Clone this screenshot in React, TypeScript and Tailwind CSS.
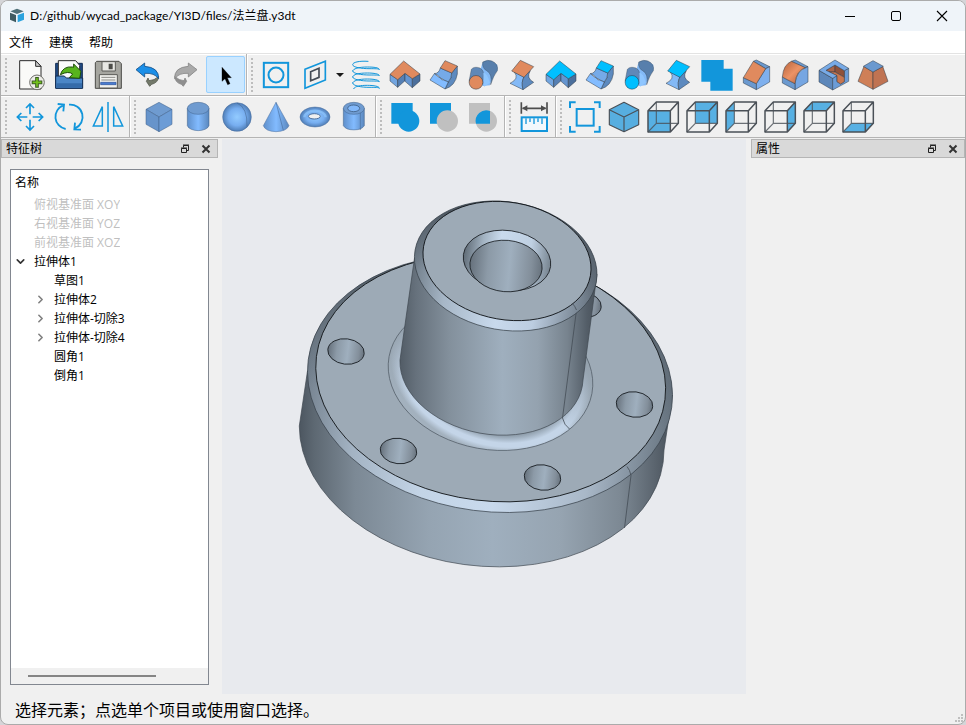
import type { ReactNode } from 'react';
import { ChevronDown, ChevronRight } from 'lucide-react';

const ACCENT = '#1296db';
const EDGE = '#2f3a46';
const ORANGE = '#e08a5e';
const CYAN = '#00bfff';

interface ToolItem {
  label: string;
  icon: ReactNode;
  active?: boolean;
  menu?: boolean;
}

interface TreeItem {
  name: string;
  depth: number;
  muted?: boolean;
  state?: 'open' | 'closed';
}

/* ---------- toolbar icons, all on a 99 x 99 grid ---------- */

function Icon({ children }: { children: ReactNode }) {
  return (
    <svg viewBox="0 0 99 99" className="size-[33px] shrink-0" fill="none" aria-hidden="true">
      {children}
    </svg>
  );
}

const NewIcon = () => (
  <Icon>
    <path d="M17 8H65L81 25V93H17Z" fill="#fafaf8" stroke="#2b2b2b" strokeWidth="3" />
    <path d="M65 8V25H81Z" fill="#cfcfcf" stroke="#2b2b2b" strokeWidth="3" />
    <circle cx="69" cy="73" r="22" fill="#ecece8" stroke="#6d6d68" strokeWidth="3" />
    <path d="M69 57V89M53 73H85" stroke="#3c5c24" strokeWidth="11" />
    <path d="M69 60V86M56 73H82" stroke="#73c31c" strokeWidth="5" />
  </Icon>
);

const OpenIcon = () => (
  <Icon>
    <path d="M8 16H88V90H8Z" fill="#1f4a86" stroke="#122c52" strokeWidth="3" />
    <path d="M16 8H68L80 22V62H16Z" fill="#fafafa" stroke="#2b2b2b" strokeWidth="3" />
    <path d="M8 54H34L40 60H89V91H8Z" fill="#4b86c6" stroke="#122c52" strokeWidth="3" />
    <path d="M10 76H87V89H10Z" fill="#356ba9" />
    <path d="M22 50Q30 24 58 27L62 28L62 18L84 40L80 61L49 59L59 48Q46 38 22 50Z" fill="#58b41c" stroke="#1d4d08" strokeWidth="3" strokeLinejoin="round" />
  </Icon>
);

const SaveIcon = () => (
  <Icon>
    <path d="M14 10H81L88 17V91H10V14Z" fill="#a5a59f" stroke="#4b4b48" strokeWidth="3" />
    <path d="M30 11H70V39H30Z" fill="#e8e8e4" stroke="#5a5a56" strokeWidth="3" />
    <path d="M50 17H62V34H50Z" fill="#4c4c48" />
    <path d="M22 50H76V90H22Z" fill="#f2f2ee" stroke="#5a5a56" strokeWidth="3" />
    <path d="M28 58H70M28 66H70" stroke="#8a8a86" strokeWidth="3" />
    <path d="M26 73H72V80H26Z" fill="#4a7dd0" stroke="#2c5299" strokeWidth="2" />
  </Icon>
);

const UndoIcon = () => (
  <Icon>
    <path d="M83 55Q82 74 62 79L56 85L46 70L51 60L54 68Q70 68 83 55Z" fill="#73796a" stroke="#3f4438" strokeWidth="2" />
    <path d="M15 35L41 15V25Q84 28 83 62Q70 44 41 46V57Z" fill="#1b8fe8" stroke="#164f87" strokeWidth="2.5" strokeLinejoin="round" />
  </Icon>
);

const RedoIcon = () => (
  <Icon>
    <path d="M14 55Q15 74 34 79L40 85L50 70L45 60L42 68Q28 68 14 55Z" fill="#8f8f8f" stroke="#7c7c7c" strokeWidth="2" />
    <path d="M81 35L55 15V25Q12 28 14 62Q27 44 55 46V57Z" fill="#a9a9a9" stroke="#868686" strokeWidth="2.5" strokeLinejoin="round" />
  </Icon>
);

const PointerIcon = () => (
  <Icon>
    <path d="M39 28V70L48 62L56 80L63 77L55 59H67Z" fill="#000" stroke="#000" strokeWidth="1" />
  </Icon>
);

const SketchIcon = () => (
  <Icon>
    <rect x="11.5" y="14.5" width="73" height="73" stroke={ACCENT} strokeWidth="6" />
    <circle cx="48" cy="51" r="22.5" stroke={ACCENT} strokeWidth="6" />
  </Icon>
);

const PlaneIcon = () => (
  <Icon>
    <path d="M18 34L79 10V66L18 91Z" stroke={ACCENT} strokeWidth="5" />
    <path d="M35 41L60 31V58L35 68Z" stroke="#444b55" strokeWidth="5" />
  </Icon>
);

const HelixIcon = () => (
  <Icon>
    <g stroke={ACCENT} strokeWidth="3" strokeLinecap="round">
      <path d="M57 10C30 8 11 13 11 20C11 28 38 32 60 32C78 32 91 32 91 35C91 29 75 27 55 27C30 27 11 32 11 39" />
      <path d="M11 39C11 47 38 51 60 51C78 51 91 51 91 53C91 48 75 45 55 45C30 45 11 49 11 57" />
      <path d="M11 57C11 65 38 69 60 69C78 69 91 69 91 72C91 66 75 63 55 63C30 63 11 68 11 75" />
      <path d="M11 75C11 84 38 88 60 88C78 88 91 88 91 91C91 85 75 82 55 82C35 82 18 84 14 92" />
    </g>
  </Icon>
);

const ExtrudeIcon = ({ tint }: { tint: string }) => (
  <Icon>
    <g stroke={EDGE} strokeWidth="1.5" strokeLinejoin="round">
      <path d="M6 49L29 65V88L6 69Z" fill="#72a5e0" />
      <path d="M29 65L51 46V68L29 88Z" fill="#557fb4" />
      <path d="M51 46L73 62V89L51 70Z" fill="#6595d0" />
      <path d="M73 62L96 48V69L73 89Z" fill="#4b6f9c" />
      <path d="M6 49L47 9L96 48L73 62L51 46L29 65Z" fill={tint} />
    </g>
  </Icon>
);

const SweepIcon = ({ tint }: { tint: string }) => (
  <Icon>
    <g stroke={EDGE} strokeWidth="1.5" strokeLinejoin="round">
      <path d="M91 24V48Q85 84 54 93L64 72Q74 62 74 45Z" fill="#5d8abf" />
      <path d="M40 30L74 45Q74 60 64 72L50 66Q46 62 40 60Q34 50 22 47Q36 46 40 30Z" fill="#75aae8" />
      <path d="M22 47L9 66L54 93L64 72L50 66Q44 68 40 60Q34 58 22 47Z" fill="#83bcff" />
      <path d="M54 8L91 24L74 45L40 30Z" fill={tint} />
    </g>
  </Icon>
);

const LoftIcon = ({ tint }: { tint: string }) => (
  <Icon>
    <path d="M48 18Q56 4 74 10L94 20V38Q80 44 72 82L50 84L38 58Z" fill="#83b9f6" />
    <path d="M50 12Q64 4 78 9Q98 18 94 38Q82 54 74 80Q80 48 62 38Q48 32 50 12Z" fill="#587fac" stroke={EDGE} strokeWidth="1" />
    <path d="M9 70L16 34Q24 24 42 30Q56 38 52 58L50 78Q30 48 9 70Z" fill="#6088b8" stroke={EDGE} strokeWidth="1" />
    <path d="M52 44Q62 42 72 74L54 86Z" fill="#8fc6ff" />
    <circle cx="30" cy="73" r="20.5" fill={tint} stroke={EDGE} strokeWidth="1.5" />
  </Icon>
);

const BoundaryIcon = ({ tint }: { tint: string }) => (
  <Icon>
    <g stroke={EDGE} strokeWidth="1.5" strokeLinejoin="round">
      <path d="M28 42Q44 62 15 76L54 95Q48 72 57 57Z" fill="#83b9f6" />
      <path d="M57 57L76 38Q62 60 86 73L54 95Q48 72 57 57Z" fill="#5d8abf" />
      <path d="M46 7L86 26L57 58L20 39Z" fill={tint} />
    </g>
  </Icon>
);

const CombineIcon = () => (
  <Icon>
    <path d="M4 6H71V32H98V98H31V71H4Z" fill={ACCENT} />
  </Icon>
);

const ChamferIcon = () => (
  <Icon>
    <g stroke={EDGE} strokeWidth="1.5" strokeLinejoin="round">
      <path d="M52 6L92 26L80 32L43 10Z" fill="#6b99cf" />
      <path d="M92 26V72L52 95V77L80 32Z" fill="#7fb0ee" />
      <path d="M13 59L52 77V95L13 75Z" fill="#6b99cf" />
      <path d="M43 10L80 32L52 77L13 59Z" fill={ORANGE} />
    </g>
  </Icon>
);

const FilletIcon = () => (
  <Icon>
    <defs>
      <linearGradient id="fillet" x1="0" y1="0" x2="1" y2="1">
        <stop offset="0" stopColor="#b4623c" />
        <stop offset=".5" stopColor="#ec9366" />
        <stop offset="1" stopColor="#a85c3a" />
      </linearGradient>
    </defs>
    <g stroke={EDGE} strokeWidth="1.5" strokeLinejoin="round">
      <path d="M52 6L90 26L80 29L40 10Z" fill="#6b99cf" />
      <path d="M90 26V72L51 95V77Q54 38 90 26Z" fill="#76a6e2" />
      <path d="M13 57L51 77V95L13 75Z" fill="#6b99cf" />
      <path d="M40 10L82 29Q54 38 51 77L13 57Q16 20 40 10Z" fill="url(#fillet)" />
    </g>
  </Icon>
);

const ShellIcon = () => (
  <Icon>
    <g stroke={EDGE} strokeWidth="1.5" strokeLinejoin="round">
      <path d="M6 37L47 61V96L6 72Z" fill="#5d87ba" />
      <path d="M47 61L60 53V71L71 78L82 71V38L95 31V70L47 96Z" fill="#6c9cd6" />
      <path d="M27 37L54 21V42L36 42Z" fill="#a9654a" />
      <path d="M54 21L82 38V58L54 42Z" fill="#90523a" />
      <path d="M54 42L82 58V71L71 78L60 71V53L36 42Z" fill="#c97750" />
      <path d="M54 6L95 31L82 38L54 21L27 37L60 53L47 61L6 37Z" fill="#78aae6" />
    </g>
  </Icon>
);

const DraftIcon = () => (
  <Icon>
    <g stroke={EDGE} strokeWidth="1.5" strokeLinejoin="round">
      <path d="M24 25L51 42V94L6 70Z" fill="#cf7f57" />
      <path d="M51 42L80 25L96 70L51 94Z" fill="#c07352" />
      <path d="M51 8L82 25L51 42L22 25Z" fill="#6b99cf" />
    </g>
  </Icon>
);

const MoveIcon = () => (
  <Icon>
    <path d="M48 13V43M48 59V89M11 51H40M56 51H85M36 24L48 12L60 24M36 78L48 90L60 78M22 39L10 51L22 63M74 39L86 51L74 63" stroke={ACCENT} strokeWidth="5" />
  </Icon>
);

const RotateIcon = () => (
  <Icon>
    <g stroke={ACCENT} strokeWidth="5.5">
      <path d="M38 87A37 37 0 0 1 31 16M14 12L33 14L31 34" />
      <path d="M48 14A37 37 0 0 1 66 85M84 89L64 88L66 68" />
    </g>
  </Icon>
);

const MirrorIcon = () => (
  <Icon>
    <path d="M48 6V96M31 20V78H4ZM65 20V78H92Z" stroke={ACCENT} strokeWidth="4.5" />
  </Icon>
);

const BoxIcon = () => (
  <Icon>
    <g stroke="#3f5f86" strokeWidth="1.5" strokeLinejoin="round">
      <path d="M48 7L87 28L48 51L9 28Z" fill="#6f9bd0" />
      <path d="M9 28L48 51V95L9 73Z" fill="#6794cb" />
      <path d="M87 28V73L48 95V51Z" fill="#6c9cd6" />
    </g>
  </Icon>
);

const CylinderIcon = () => (
  <Icon>
    <defs>
      <linearGradient id="cyl">
        <stop offset="0" stopColor="#5f8fca" />
        <stop offset=".5" stopColor="#82bbff" />
        <stop offset="1" stopColor="#5a87bd" />
      </linearGradient>
    </defs>
    <g stroke="#3f5f86" strokeWidth="1.5">
      <path d="M16 25V77A33 18 0 0 0 81 77V25Z" fill="url(#cyl)" />
      <ellipse cx="48.5" cy="25" rx="32.5" ry="18" fill="#6f9bd0" />
    </g>
  </Icon>
);

const SphereIcon = () => (
  <Icon>
    <defs>
      <radialGradient id="sph">
        <stop offset="0" stopColor="#93cbff" />
        <stop offset=".6" stopColor="#77aef0" />
        <stop offset="1" stopColor="#4f7db5" />
      </radialGradient>
    </defs>
    <circle cx="48" cy="51" r="43" fill="url(#sph)" stroke="#4a6f9e" strokeWidth="1.5" />
    <path d="M48 9Q80 22 78 80" stroke="#3f5f86" strokeWidth="1.5" />
  </Icon>
);

const ConeIcon = () => (
  <Icon>
    <path d="M48 7L10 77Q16 94 48 95Q80 94 87 77Z" fill="url(#cyl)" stroke="#4a6f9e" strokeWidth="1.5" />
    <path d="M48 7L70 91" stroke="#3f5f86" strokeWidth="1.5" />
  </Icon>
);

const TorusIcon = () => (
  <Icon>
    <ellipse cx="48" cy="51" rx="45" ry="30" fill="url(#sph)" stroke="#4a6f9e" strokeWidth="1.5" />
    <path d="M16 52A32 20 0 1 1 80 52" stroke="#93cbff" strokeWidth="7" opacity=".6" />
    <ellipse cx="46" cy="49" rx="18" ry="8" fill="#f0f0f0" stroke="#4a6f9e" strokeWidth="3" />
  </Icon>
);

const TubeIcon = () => (
  <Icon>
    <g stroke="#3f5f86" strokeWidth="1.5">
      <path d="M16 25V77A33 18 0 0 0 79 77V25Z" fill="url(#cyl)" />
      <ellipse cx="47.5" cy="25" rx="31.5" ry="18" fill="#6f9bd0" />
      <ellipse cx="47" cy="25" rx="18" ry="10" fill="#82b8fa" strokeWidth="2.5" />
      <path d="M67 39V90" />
    </g>
  </Icon>
);

const UnionIcon = () => (
  <Icon>
    <path d="M7 9H71V71H7Z" fill={ACCENT} />
    <circle cx="59" cy="63" r="32" fill={ACCENT} />
  </Icon>
);

const SubtractIcon = () => (
  <Icon>
    <path d="M6 9H69V71H6Z" fill={ACCENT} />
    <circle cx="58" cy="63" r="32" fill="#c0c0c0" />
  </Icon>
);

const IntersectIcon = () => (
  <Icon>
    <path d="M6 9H69V71H6Z" fill="#c0c0c0" />
    <circle cx="58" cy="63" r="32" fill="#c0c0c0" />
    <path d="M69 71V33A32 32 0 0 0 27 71Z" fill={ACCENT} />
  </Icon>
);

const MeasureIcon = () => (
  <Icon>
    <path d="M10 7V41M87 7V41M14 25H83" stroke="#4d4d4d" strokeWidth="5" />
    <path d="M12 25L28 16V34ZM85 25L69 16V34Z" fill="#4d4d4d" />
    <rect x="11" y="52" width="76" height="41" fill="#f2f8fc" stroke={ACCENT} strokeWidth="6" />
    <path d="M24 55V72M36 55V66M48 55V72M60 55V66M72 55V72" stroke={ACCENT} strokeWidth="4" />
  </Icon>
);

const FitIcon = () => (
  <Icon>
    <rect x="23" y="27" width="51" height="50" stroke={ACCENT} strokeWidth="6" />
    <path d="M3 24V7H20M75 7H92V24M92 78V95H75M20 95H3V78" stroke={ACCENT} strokeWidth="6" />
  </Icon>
);

const IsoIcon = () => (
  <Icon>
    <g stroke="#4a5057" strokeWidth="3.5" strokeLinejoin="round" fill="#57aee0">
      <path d="M48 7L92 29V74L48 95L4 74V29Z" />
      <path d="M4 29L48 51L92 29M48 51V95" />
    </g>
  </Icon>
);

const FACES = {
  front: 'M3 32H70V96H3Z',
  back: 'M28 6H94V70H28Z',
  left: 'M3 32L28 6V70L3 96Z',
  right: 'M70 32L94 6V70L70 96Z',
  top: 'M3 32L28 6H94L70 32Z',
  bottom: 'M3 96L28 70H94L70 96Z',
};

const ViewIcon = ({ face }: { face: keyof typeof FACES }) => (
  <Icon>
    <path d={FACES[face]} fill="#57b0e3" />
    <path d="M28 6V70H94M3 96L28 70" stroke="#4a5057" strokeWidth="3.5" opacity=".8" />
    <path d="M3 32H70V96H3ZM3 32L28 6H94V70L70 96M70 32L94 6" stroke="#4a5057" strokeWidth="4.5" strokeLinejoin="round" />
  </Icon>
);

const TOOLBARS: ToolItem[][][] = [
  [
    [
      { label: '新建', icon: <NewIcon /> },
      { label: '打开', icon: <OpenIcon /> },
      { label: '保存', icon: <SaveIcon /> },
      { label: '撤销', icon: <UndoIcon /> },
      { label: '重做', icon: <RedoIcon /> },
      { label: '选择', icon: <PointerIcon />, active: true },
    ],
    [
      { label: '草图', icon: <SketchIcon /> },
      { label: '基准面', icon: <PlaneIcon />, menu: true },
      { label: '螺旋线', icon: <HelixIcon /> },
      { label: '拉伸切除', icon: <ExtrudeIcon tint={ORANGE} /> },
      { label: '扫描切除', icon: <SweepIcon tint={ORANGE} /> },
      { label: '放样切除', icon: <LoftIcon tint={ORANGE} /> },
      { label: '边界切除', icon: <BoundaryIcon tint={ORANGE} /> },
      { label: '拉伸', icon: <ExtrudeIcon tint={CYAN} /> },
      { label: '扫描', icon: <SweepIcon tint={CYAN} /> },
      { label: '放样', icon: <LoftIcon tint={CYAN} /> },
      { label: '边界', icon: <BoundaryIcon tint={CYAN} /> },
      { label: '组合', icon: <CombineIcon /> },
      { label: '倒角', icon: <ChamferIcon /> },
      { label: '圆角', icon: <FilletIcon /> },
      { label: '抽壳', icon: <ShellIcon /> },
      { label: '拔模', icon: <DraftIcon /> },
    ],
  ],
  [
    [
      { label: '移动', icon: <MoveIcon /> },
      { label: '旋转', icon: <RotateIcon /> },
      { label: '镜像', icon: <MirrorIcon /> },
    ],
    [
      { label: '长方体', icon: <BoxIcon /> },
      { label: '圆柱', icon: <CylinderIcon /> },
      { label: '球体', icon: <SphereIcon /> },
      { label: '圆锥', icon: <ConeIcon /> },
      { label: '圆环', icon: <TorusIcon /> },
      { label: '圆管', icon: <TubeIcon /> },
    ],
    [
      { label: '并集', icon: <UnionIcon /> },
      { label: '差集', icon: <SubtractIcon /> },
      { label: '交集', icon: <IntersectIcon /> },
    ],
    [{ label: '测量', icon: <MeasureIcon /> }],
    [
      { label: '适合窗口', icon: <FitIcon /> },
      { label: '轴测图', icon: <IsoIcon /> },
      { label: '前视图', icon: <ViewIcon face="front" /> },
      { label: '后视图', icon: <ViewIcon face="back" /> },
      { label: '左视图', icon: <ViewIcon face="left" /> },
      { label: '右视图', icon: <ViewIcon face="right" /> },
      { label: '俯视图', icon: <ViewIcon face="top" /> },
      { label: '仰视图', icon: <ViewIcon face="bottom" /> },
    ],
  ],
];

const TREE: TreeItem[] = [
  { name: '俯视基准面 XOY', depth: 0, muted: true },
  { name: '右视基准面 YOZ', depth: 0, muted: true },
  { name: '前视基准面 XOZ', depth: 0, muted: true },
  { name: '拉伸体1', depth: 0, state: 'open' },
  { name: '草图1', depth: 1 },
  { name: '拉伸体2', depth: 1, state: 'closed' },
  { name: '拉伸体-切除3', depth: 1, state: 'closed' },
  { name: '拉伸体-切除4', depth: 1, state: 'closed' },
  { name: '圆角1', depth: 1 },
  { name: '倒角1', depth: 1 },
];

function TitleBar() {
  return (
    <header className="flex h-[30px] shrink-0 items-center bg-[#eff4f9] pl-2">
      <svg viewBox="0 0 48 48" className="size-4" aria-hidden="true">
        <path d="M24 2L44 10L24 18L4 10Z" fill="#4f6f77" />
        <path d="M3 14L21 21V43L3 35Z" fill="#3f5a61" />
        <path d="M45 14L26 21V43L45 35Z" fill="#2ba3de" />
      </svg>
      <h1 className="ml-[5px] flex-1 truncate font-['Lato','Noto_Sans_CJK_SC',sans-serif] text-xs">
        D:/github/wycad_package/YI3D/files/法兰盘.y3dt
      </h1>
      <button aria-label="最小化" className="flex h-full w-[46px] items-center justify-center">
        <span className="h-px w-[10px] bg-black" />
      </button>
      <button aria-label="最大化" className="flex h-full w-[46px] items-center justify-center">
        <span className="size-[10px] rounded-[2px] border border-black" />
      </button>
      <button aria-label="关闭" className="flex h-full w-[46px] items-center justify-center">
        <svg viewBox="0 0 12 12" className="size-3" aria-hidden="true">
          <path d="M1 1L11 11M11 1L1 11" stroke="#000" strokeWidth="1.1" />
        </svg>
      </button>
    </header>
  );
}

function ToolButton({ label, icon, active, menu }: ToolItem) {
  return (
    <button
      aria-label={label}
      className={`flex h-[37px] shrink-0 items-center ${menu ? 'w-[50px] pl-[3px]' : 'w-[39px] justify-center'} ${
        active ? 'rounded-[2px] bg-[#cce8ff] outline outline-1 -outline-offset-1 outline-[#99d1ff]' : ''
      }`}
    >
      {icon}
      {menu && <span className="ml-1 border-x-4 border-t-4 border-x-transparent border-t-[#1a1a1a]" />}
    </button>
  );
}

function ToolBar({ groups }: { groups: ToolItem[][] }) {
  return (
    <div role="toolbar" className="flex h-[42px] shrink-0 overflow-hidden border-b border-[#b4b4b4] shadow-[inset_0_1px_0_#fff]">
      {groups.map((items, i) => (
        <div key={i} className="flex">
          <div
            className={`flex h-full shrink-0 ${
              i ? 'ml-px w-[11px] border-l border-[#b4b4b4] pl-1 shadow-[inset_1px_0_0_#fff]' : 'w-[10px] pl-1'
            }`}
          >
            <div className="mb-[3px] mt-1 w-[2px] bg-[linear-gradient(#bdbdbd_2px,transparent_2px)] bg-[length:2px_4px]" />
          </div>
          <div className="flex pt-[2px]">
            {items.map((item) => (
              <ToolButton key={item.label} {...item} />
            ))}
          </div>
        </div>
      ))}
    </div>
  );
}

function DockHeader({ title }: { title: string }) {
  return (
    <div className="flex h-[19px] shrink-0 items-center border border-[#b5b5b5] bg-[#d9d9d9] pl-1 text-xs">
      <h2 className="flex-1">{title}</h2>
      <button aria-label={`浮动${title}`} className="mr-[11px]">
        <svg viewBox="0 0 10 10" className="size-[10px]" fill="none" stroke="#222" aria-hidden="true">
          <path d="M3.5 3.5V1.5H8.5V6.500H6.5M1.5 4.5H6.5V8.5H1.5Z" />
          <path d="M3 1H9M1 4H7" />
        </svg>
      </button>
      <button aria-label={`关闭${title}`} className="mr-[6px]">
        <svg viewBox="0 0 10 10" className="size-[10px]" aria-hidden="true">
          <path d="M1.5 1.5L8.5 8.5M8.5 1.5L1.5 8.5" stroke="#333" strokeWidth="2" />
        </svg>
      </button>
    </div>
  );
}

function FeatureTree() {
  return (
    <div className="mx-[9px] mb-[9px] mt-[11px] flex min-h-0 flex-1 flex-col border border-[#828790] bg-white text-xs">
      <div className="flex h-[25px] shrink-0 items-center pl-1">名称</div>
      <ul className="min-h-0 flex-1 overflow-hidden">
        {TREE.map(({ name, depth, muted, state }) => (
          <li key={name} className={`flex h-[19px] items-center ${depth ? 'pl-5' : ''} ${muted ? 'text-[#bfbfbf]' : ''}`}>
            <span className="mr-1 flex w-[19px] justify-center">
              {state === 'open' && (
                <button aria-label="折叠">
                  <ChevronDown size={13} strokeWidth={3} className="text-[#333]" />
                </button>
              )}
              {state === 'closed' && (
                <button aria-label="展开">
                  <ChevronRight size={13} strokeWidth={3} className="text-[#808080]" />
                </button>
              )}
            </span>
            <span className="truncate">{name}</span>
          </li>
        ))}
      </ul>
      <div className="flex h-4 shrink-0 items-center bg-[#f0f0f0] pl-[17px]">
        <div className="h-[2px] w-32 bg-[#858585]" />
      </div>
    </div>
  );
}

const HOLES = [
  [583, 305],
  [346, 351.5],
  [398.5, 451],
  [542.5, 477.5],
  [634.5, 404.5],
];

function FlangeModel() {
  return (
    <svg viewBox="222 139 524 555" className="size-full" fill="none" role="img" aria-label="法兰盘">
      <defs>
        <linearGradient id="rim" gradientUnits="userSpaceOnUse" x1="299" y1="0" x2="672" y2="0">
          <stop offset="0" stopColor="#4c5660" />
          <stop offset=".04" stopColor="#5d6872" />
          <stop offset=".15" stopColor="#7c8995" />
          <stop offset=".35" stopColor="#95a4b2" />
          <stop offset=".52" stopColor="#9fafbe" />
          <stop offset=".7" stopColor="#96a4b1" />
          <stop offset=".86" stopColor="#7d8994" />
          <stop offset=".95" stopColor="#5c6670" />
          <stop offset="1" stopColor="#48515a" />
        </linearGradient>
        <linearGradient id="rimEdge" gradientUnits="userSpaceOnUse" x1="307" y1="0" x2="672" y2="0">
          <stop offset="0" stopColor="#75828f" />
          <stop offset=".15" stopColor="#a3b3c3" />
          <stop offset=".35" stopColor="#c3d4e6" />
          <stop offset=".55" stopColor="#c8d9ec" />
          <stop offset=".8" stopColor="#a9b8c8" />
          <stop offset="1" stopColor="#6b7884" />
        </linearGradient>
        <linearGradient id="rimShade" gradientUnits="userSpaceOnUse" x1="0" y1="300" x2="0" y2="410">
          <stop offset="0" stopColor="#56616b" />
          <stop offset="1" stopColor="#56616b" stopOpacity="0" />
        </linearGradient>
        <linearGradient id="hub" gradientUnits="userSpaceOnUse" x1="400" y1="0" x2="597" y2="0">
          <stop offset="0" stopColor="#525c66" />
          <stop offset=".08" stopColor="#66717c" />
          <stop offset=".25" stopColor="#83909c" />
          <stop offset=".52" stopColor="#9fafbe" />
          <stop offset=".7" stopColor="#94a2af" />
          <stop offset=".85" stopColor="#77838e" />
          <stop offset=".95" stopColor="#535d67" />
          <stop offset="1" stopColor="#48515a" />
        </linearGradient>
        <linearGradient id="hubEdge" gradientUnits="userSpaceOnUse" x1="414" y1="0" x2="597" y2="0">
          <stop offset="0" stopColor="#6f7c88" />
          <stop offset=".2" stopColor="#a7b7c7" />
          <stop offset=".5" stopColor="#c8d9ec" />
          <stop offset=".7" stopColor="#bccde0" />
          <stop offset="1" stopColor="#66727e" />
        </linearGradient>
        <linearGradient id="hubShade" gradientUnits="userSpaceOnUse" x1="0" y1="225" x2="0" y2="285">
          <stop offset="0" stopColor="#505a64" />
          <stop offset="1" stopColor="#505a64" stopOpacity="0" />
        </linearGradient>
        <radialGradient id="fillet3d" gradientUnits="userSpaceOnUse" cx="0" cy="0" r="1" gradientTransform="translate(490.5 375) rotate(10.3) scale(103 74.4)">
          <stop offset=".78" stopColor="#93a2b0" />
          <stop offset=".87" stopColor="#c4d5e8" />
          <stop offset=".92" stopColor="#c4d5e8" />
          <stop offset="1" stopColor="#a3b1be" />
        </radialGradient>
        <linearGradient id="filletShade" gradientUnits="userSpaceOnUse" x1="0" y1="340" x2="0" y2="415">
          <stop offset="0" stopColor="#94a1ad" />
          <stop offset=".3" stopColor="#94a1ad" stopOpacity=".7" />
          <stop offset="1" stopColor="#94a1ad" stopOpacity="0" />
        </linearGradient>
        <linearGradient id="boreEdge">
          <stop offset="0" stopColor="#5f6b76" />
          <stop offset=".2" stopColor="#a2b2c1" />
          <stop offset=".4" stopColor="#c9daed" />
          <stop offset=".75" stopColor="#bfd0e2" />
          <stop offset="1" stopColor="#76838f" />
        </linearGradient>
        <linearGradient id="bore">
          <stop offset="0" stopColor="#66717c" />
          <stop offset=".25" stopColor="#8c9aa7" />
          <stop offset=".55" stopColor="#9fafbe" />
          <stop offset=".85" stopColor="#838f9b" />
          <stop offset="1" stopColor="#68737e" />
        </linearGradient>
      </defs>

      {/* flange body, its chamfer and top face */}
      <path d="M307.500 371L299.300 426A179.200 125 7.400 0 0 664 450L672.300 395Z" fill="url(#rim)" stroke="#3f4850" strokeWidth=".7" />
      <ellipse cx="490" cy="383.5" rx="183.3" ry="127.9" transform="rotate(7.4 490 383.5)" fill="url(#rimEdge)" />
      <ellipse cx="490" cy="383.5" rx="183.3" ry="127.9" transform="rotate(7.4 490 383.5)" fill="url(#rimShade)" stroke="#38414a" strokeWidth=".7" />
      <ellipse cx="490.7" cy="378" rx="175.6" ry="122.9" transform="rotate(7 490.7 378)" fill="#9daab6" stroke="#15191d" strokeWidth=".9" />
      <path d="M627 466.500Q630 470 631 475.500L624.500 528" stroke="#444d56" strokeWidth=".8" />

      {HOLES.map(([cx, cy]) => (
        <ellipse key={cx} cx={cx} cy={cy} rx="18.3" ry="12.7" transform={`rotate(7 ${cx} ${cy})`} fill="url(#bore)" stroke="#1d2227" strokeWidth=".9" />
      ))}

      {/* fillet between flange and hub */}
      <ellipse cx="490.5" cy="375" rx="103.1" ry="74.4" transform="rotate(10.3 490.5 375)" fill="url(#fillet3d)" />
      <ellipse cx="490.5" cy="375" rx="103.1" ry="74.4" transform="rotate(10.3 490.5 375)" fill="url(#filletShade)" stroke="#59646e" strokeWidth=".8" />

      {/* hub */}
      <path d="M414.500 258L400 360A92 64 10 0 0 583 380L597 274Z" fill="url(#hub)" stroke="#3f4850" strokeWidth=".7" />
      <path d="M576.500 310L562.500 418Q564 425 569.500 429" stroke="#444d56" strokeWidth=".8" />
      <ellipse cx="505.7" cy="266" rx="92" ry="64" transform="rotate(10 505.7 266)" fill="url(#hubEdge)" />
      <ellipse cx="505.7" cy="266" rx="92" ry="64" transform="rotate(10 505.7 266)" fill="url(#hubShade)" stroke="#38414a" strokeWidth=".7" />
      <ellipse cx="507" cy="261" rx="84.7" ry="58.7" transform="rotate(10 507 261)" fill="#9daab6" stroke="#15191d" strokeWidth=".9" />
      <path d="M572 303Q575 306 576.500 310" stroke="#444d56" strokeWidth=".8" />

      {/* bore */}
      <ellipse cx="507" cy="260.5" rx="44" ry="30" transform="rotate(8 507 260.5)" fill="url(#boreEdge)" stroke="#15191d" strokeWidth=".8" />
      <ellipse cx="506" cy="266" rx="36.2" ry="25.7" transform="rotate(5 506 266)" fill="url(#bore)" stroke="#15191d" strokeWidth=".8" />
    </svg>
  );
}

export default function App() {
  return (
    <div className="bg-[#d5d5d8]">
      <div className="flex h-screen min-h-[480px] flex-col overflow-hidden rounded-lg border border-[#ababab] bg-[#f0f0f0] font-['Open_Sans','Noto_Sans_CJK_SC',sans-serif] text-black">
        <TitleBar />
        <nav className="flex h-[23px] shrink-0 items-center border-b border-[#e3e3e3] bg-white text-xs">
          {['文件', '建模', '帮助'].map((m) => (
            <button key={m} className="h-full px-2 pt-[2px]">
              {m}
            </button>
          ))}
        </nav>
        {TOOLBARS.map((groups, i) => (
          <ToolBar key={i} groups={groups} />
        ))}

        <div className="flex min-h-0 flex-1 pt-px">
          <aside className="flex w-[217px] shrink-0 flex-col">
            <DockHeader title="特征树" />
            <FeatureTree />
          </aside>
          <main className="ml-1 mr-[5px] min-w-0 flex-1 bg-[#e8eaee]">
            <FlangeModel />
          </main>
          <aside className="w-[214px] shrink-0">
            <DockHeader title="属性" />
          </aside>
        </div>

        <footer className="flex h-[30px] shrink-0 items-center justify-between pl-[14px] pr-[2px] pt-px text-base">
          <p>选择元素；点选单个项目或使用窗口选择。</p>
          <svg viewBox="0 0 8 8" className="mb-[2px] size-2 self-end" fill="#bfbfbf" aria-hidden="true">
            <path d="M6 0H8V2H6ZM3 3H5V5H3ZM6 3H8V5H6ZM0 6H2V8H0ZM3 6H5V8H3ZM6 6H8V8H6Z" />
          </svg>
        </footer>
      </div>
    </div>
  );
}
